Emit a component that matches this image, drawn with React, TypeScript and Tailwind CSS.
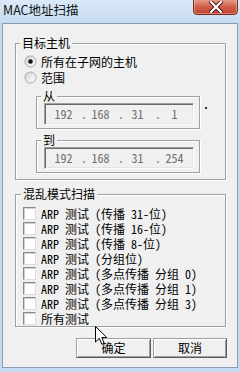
import React from "react";

const FONT = { fontFamily: '"Noto Sans Mono CJK SC", "Noto Sans CJK SC", "DejaVu Sans Mono", monospace' };

function Radio({ checked }: { checked?: boolean }) {
  return (
    <svg width="13" height="13" viewBox="0 0 13 13" className="shrink-0">
      <defs>
        <linearGradient id={checked ? "rg1" : "rg2"} x1="0" y1="0" x2="1" y2="1">
          <stop offset="0" stopColor="#d4d4d4" />
          <stop offset="1" stopColor="#ffffff" />
        </linearGradient>
      </defs>
      <circle cx="6.5" cy="6.5" r="5.5" fill={`url(#${checked ? "rg1" : "rg2"})`} stroke="#a6a6a6" />
      {checked && <circle cx="6.5" cy="6.5" r="2.3" fill="#111" />}
    </svg>
  );
}

function Check() {
  return (
    <div className="w-[13px] h-[13px] shrink-0 border border-t-[#8a8a8a] border-l-[#8a8a8a] border-r-[#dcdcdc] border-b-[#dcdcdc] bg-white shadow-[inset_1px_1px_0_#d0d0d0]" />
  );
}

function IpField({ parts }: { parts: string[] }) {
  return (
    <div className="h-[22px] w-[150px] border border-t-[#a0a0a0] border-l-[#a0a0a0] border-r-white border-b-white shadow-[inset_1px_1px_0_#696969,inset_-1px_-1px_0_#e3e3e3] bg-[#f0f0f0] flex items-center pl-[1px] text-[#6d6d6d] text-[12px] leading-[12px]">
      {parts.map((p, i) => (
        <React.Fragment key={i}>
          <span className="w-[35px] text-center">{p}</span>
          {i < 3 && <span className="w-[2px] overflow-visible whitespace-nowrap">.</span>}
        </React.Fragment>
      ))}
    </div>
  );
}

function SubBox({ label, parts }: { label: string; parts: string[] }) {
  return (
    <div className="relative w-[164px] h-[33px] border border-[#a0a0a0] shadow-[inset_1px_1px_0_#fff,1px_1px_0_#fff] pl-[7px] pt-[6px]">
      <span className="absolute left-[4px] top-[-7px] px-[2px] bg-[#f0f0f0] text-[12px] leading-[12px] text-black">{label}</span>
      <IpField parts={parts} />
    </div>
  );
}

const checks = [
  "ARP 测试 (传播 31-位)",
  "ARP 测试 (传播 16-位)",
  "ARP 测试 (传播 8-位)",
  "ARP 测试 (分组位)",
  "ARP 测试 (多点传播 分组 0)",
  "ARP 测试 (多点传播 分组 1)",
  "ARP 测试 (多点传播 分组 3)",
  "所有测试",
];

export default function App() {
  return (
    <div className="relative w-[240px] h-[372px] overflow-hidden bg-[#c4daf1] flex flex-col" style={FONT}>
      {/* title bar */}
      <div className="h-[23px] shrink-0 flex items-start justify-between bg-gradient-to-b from-[#dae9f8] to-[#c6dbf1]">
        <span
          className="pl-[3px] pt-[2px] text-[12.5px] leading-[16px] text-[#111]"
          style={{ fontFamily: '"Noto Sans CJK SC", "Noto Sans", sans-serif' }}
        >
          MAC地址扫描
        </span>
        <div className="mr-[2px] mt-[-2px] w-[45px] h-[17px] rounded-b-[4px] border border-[#7b2a1f] bg-gradient-to-b from-[#e8a493] via-[#d0604c] to-[#c3412c] shadow-[inset_0_0_0_1px_rgba(255,255,255,0.35)] flex items-center justify-center">
          <svg width="14" height="12" viewBox="0 0 14 12">
            <path d="M2 1 L12 11 M12 1 L2 11" stroke="#4a1a12" strokeWidth="4.2" strokeLinecap="square" />
            <path d="M2 1 L12 11 M12 1 L2 11" stroke="#ffffff" strokeWidth="2.2" strokeLinecap="square" />
          </svg>
        </div>
      </div>

      {/* client area */}
      <div className="mx-[2px] w-[236px] h-[345px] border border-[#8c9bae] bg-[#f0f0f0] pl-[12px] pt-[19px] flex flex-col text-[12px] leading-[13px] text-black">
        {/* group 1 */}
        <div className="relative w-[211px] h-[137px] border border-[#a0a0a0] shadow-[inset_1px_1px_0_#fff,1px_1px_0_#fff] flex flex-col">
          <span className="absolute left-[4px] top-[-7px] px-[2px] bg-[#f0f0f0] leading-[12px]">目标主机</span>
          <div className="mt-[10px] ml-[8px] flex items-center gap-[4px] h-[15px]">
            <Radio checked />
            <span className="leading-[15px]">所有在子网的主机</span>
          </div>
          <div className="mt-[1px] ml-[8px] flex items-center gap-[4px] h-[15px]">
            <Radio />
            <span className="leading-[15px]">范围</span>
          </div>
          <div className="mt-[11px] ml-[20px] flex items-start">
            <SubBox label="从" parts={["192", "168", "31", "1"]} />
            <div className="ml-[5px] mt-[11px] w-[2px] h-[2px] bg-[#333]" />
          </div>
          <div className="mt-[11px] ml-[20px] flex">
            <SubBox label="到" parts={["192", "168", "31", "254"]} />
          </div>
        </div>

        {/* group 2 */}
        <div className="relative mt-[14px] w-[211px] h-[133px] border border-[#a0a0a0] shadow-[inset_1px_1px_0_#fff,1px_1px_0_#fff] flex flex-col pt-[11px] pl-[7px]">
          <span className="absolute left-[5px] top-[-7px] px-[2px] bg-[#f0f0f0] leading-[12px]">混乱模式扫描</span>
          {checks.map((c) => (
            <div key={c} className="flex items-center gap-[5px] h-[15px] whitespace-pre">
              <Check />
              <span className="leading-[15px]">{c}</span>
            </div>
          ))}
        </div>

        {/* buttons */}
        <div className="mt-[11px] w-[212px] flex justify-end gap-[2px]">
          <button className="w-[75px] h-[20px] border border-t-[#a0a0a0] border-l-[#a0a0a0] border-r-[#5a5a5a] border-b-[#5a5a5a] shadow-[inset_1px_1px_0_#fff,inset_-1px_-1px_0_#a0a0a0] bg-[#f0f0f0] text-[12px] leading-[12px] text-black">
            确定
          </button>
          <button className="w-[74px] h-[20px] border border-t-[#a0a0a0] border-l-[#a0a0a0] border-r-[#5a5a5a] border-b-[#5a5a5a] shadow-[inset_1px_1px_0_#fff,inset_-1px_-1px_0_#a0a0a0] bg-[#f0f0f0] text-[12px] leading-[12px] text-black">
            取消
          </button>
        </div>
      </div>

      {/* mouse cursor */}
      <svg className="absolute left-[95px] top-[326px]" width="13" height="20" viewBox="0 0 13 20">
        <path d="M0.5 0.5 L0.5 16 L4.3 12.3 L6.8 18.3 L9.2 17.3 L6.8 11.5 L11.8 11.5 Z" fill="#fff" stroke="#000" strokeWidth="1" strokeLinejoin="miter" />
      </svg>
    </div>
  );
}
